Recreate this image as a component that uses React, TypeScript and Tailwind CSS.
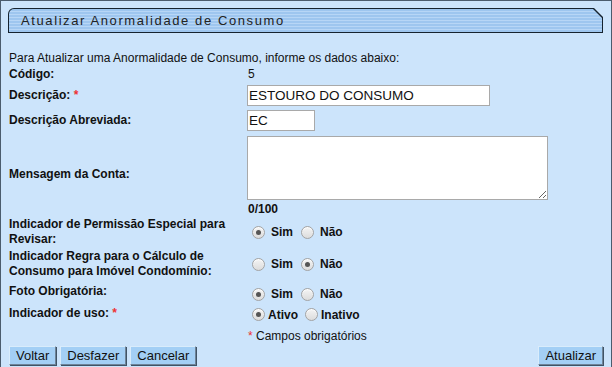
import React from "react";

function Radio({ checked }: { checked?: boolean }) {
    return (
        <span className="inline-flex h-[13px] w-[13px] shrink-0 items-center justify-center rounded-full border border-[#a3a3a3] bg-[linear-gradient(#f4f4f4,#dcdcdc)] shadow-[inset_0_1px_1px_rgba(255,255,255,0.9)]">
            {checked && <span className="h-[5px] w-[5px] rounded-full bg-[#555]" />}
        </span>
    );
}

function RadioPair({ a, b, first }: { a: string; b: string; first: boolean }) {
    return (
        <div className="flex items-center pl-[4px]">
            <Radio checked={first} />
            <span className="ml-[6px] w-[30px] font-bold">{a}</span>
            <Radio checked={!first} />
            <span className="ml-[6px] font-bold">{b}</span>
        </div>
    );
}

function Btn({ children }: { children: React.ReactNode }) {
    return (
        <button className="h-[19px] border border-[#6f8499] border-l-[#d9ecfb] border-t-[#d9ecfb] bg-[#a3cff5] px-[6px] text-[13px] leading-[17px] text-[#111] shadow-[1px_1px_0_#3f5366]">
            {children}
        </button>
    );
}

const star = <span className="text-[#e33]">*</span>;

export default function App() {
    return (
        <div className="h-[367px] w-[612px] overflow-hidden border-x border-t border-[#4b5c6d] bg-[#cce4fb] pl-[7px] pr-[8px] pt-[7px] text-[12px] leading-[15px] text-[#111]" style={{ fontFamily: '"Liberation Sans", Arial, sans-serif' }}>
            <div className="h-[25px] rounded-tl-[6px] bg-[#16232f] p-px [clip-path:polygon(0_0,calc(100%-9px)_0,100%_9px,100%_100%,0_100%)]">
                <div className="flex h-full items-center rounded-tl-[5px] bg-[repeating-linear-gradient(#9ec6ef_0px,#9ec6ef_2px,#b7d6f6_2px,#b7d6f6_3px)] pl-[12px] text-[13px] tracking-[1.6px] text-[#222] [clip-path:polygon(0_0,calc(100%-9px)_0,100%_9px,100%_100%,0_100%)]">
                    Atualizar Anormalidade de Consumo
                </div>
            </div>

            <div className="mt-[17px] flex h-[16px] items-center pl-px">Para Atualizar uma Anormalidade de Consumo, informe os dados abaixo:</div>

            <div className="grid grid-cols-[239px_1fr] pl-px">
                <div className="flex h-[17px] items-center font-bold">Código:</div>
                <div className="flex h-[17px] items-center">5</div>

                <div className="flex h-[24px] items-center font-bold">Descrição:&nbsp;{star}</div>
                <div className="flex h-[24px] items-center">
                    <input readOnly value="ESTOURO DO CONSUMO" className="-ml-px h-[21px] w-[243px] border border-[#a9a9a9] bg-white px-[1px] text-[13.5px] text-[#111] outline-none" />
                </div>

                <div className="mt-px flex h-[24px] items-center font-bold">Descrição Abreviada:</div>
                <div className="mt-px flex h-[24px] items-center">
                    <input readOnly value="EC" className="-ml-px h-[21px] w-[68px] border border-[#a9a9a9] bg-white px-[1px] text-[13.5px] text-[#111] outline-none" />
                </div>

                <div className="flex items-center font-bold">Mensagem da Conta:</div>
                <div className="pt-[4px]">
                    <textarea readOnly className="-ml-px block h-[64px] w-[301px] resize border border-[#a9a9a9] bg-white outline-none" />
                    <div className="mt-[2px] flex h-[15px] items-center font-bold">0/100</div>
                </div>

                <div className="-mt-px flex h-[32px] flex-col justify-center font-bold">
                    <span>Indicador de Permissão Especial para</span>
                    <span>Revisar:</span>
                </div>
                <div className="-mt-px flex h-[32px] items-center">
                    <RadioPair a="Sim" b="Não" first={true} />
                </div>

                <div className="flex h-[32px] flex-col justify-center font-bold">
                    <span>Indicador Regra para o Cálculo de</span>
                    <span>Consumo para Imóvel Condomínio:</span>
                </div>
                <div className="flex h-[32px] items-center">
                    <RadioPair a="Sim" b="Não" first={false} />
                </div>

                <div className="flex h-[25px] items-start pt-[4px] font-bold">Foto Obrigatória:</div>
                <div className="flex h-[25px] items-center pt-[4px]">
                    <RadioPair a="Sim" b="Não" first={true} />
                </div>

                <div className="flex h-[23px] items-start pt-[1px] font-bold">Indicador de uso:&nbsp;{star}</div>
                <div className="flex h-[23px] items-start pt-[3px] pl-[4px]">
                    <Radio checked />
                    <span className="ml-[3px] font-bold">Ativo</span>
                    <span className="ml-[7px]"><Radio /></span>
                    <span className="ml-[3px] font-bold">Inativo</span>
                </div>

                <div className="h-[16px]" />
                <div className="flex h-[16px] items-center">{star}&nbsp;Campos obrigatórios</div>
            </div>

            <div className="mt-[2px] flex items-center justify-between pl-[1px]">
                <div className="flex gap-[4px]">
                    <Btn>Voltar</Btn>
                    <Btn>Desfazer</Btn>
                    <Btn>Cancelar</Btn>
                </div>
                <Btn>Atualizar</Btn>
            </div>
        </div>
    );
}
